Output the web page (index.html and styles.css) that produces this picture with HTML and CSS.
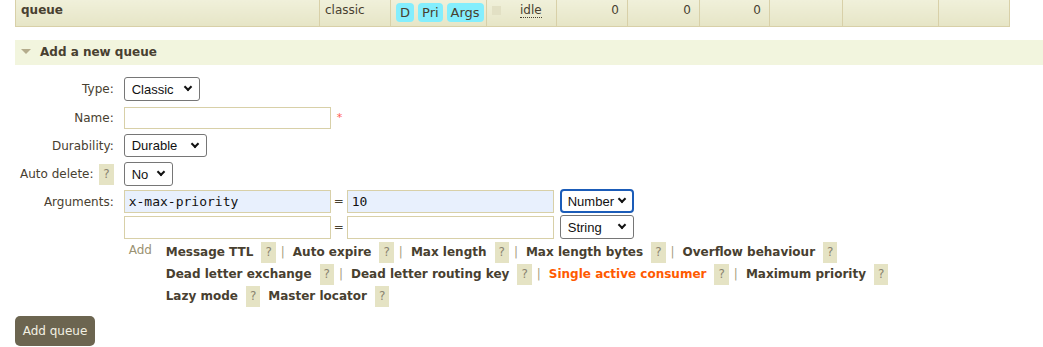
FILE: index.html
```html
<!DOCTYPE html>
<html lang="en">
<head>
  <meta charset="UTF-8">
  <title>Queues</title>
  <link rel="stylesheet" href="styles.css">
</head>
<body>

<!-- Queue list (last row visible) -->
<table class="list">
  <colgroup>
    <col style="width:304px"><col style="width:71px"><col style="width:96px"><col style="width:70px">
    <col style="width:71px"><col style="width:72px"><col style="width:70px"><col style="width:73px">
    <col style="width:96px"><col style="width:71px">
  </colgroup>
  <tr>
    <td class="name">queue</td>
    <td>classic</td>
    <td class="features"><span class="badge">D</span><span class="badge">Pri</span><span class="badge">Args</span></td>
    <td><span class="state-box"></span><abbr class="state">idle</abbr></td>
    <td class="r">0</td>
    <td class="r">0</td>
    <td class="r">0</td>
    <td></td>
    <td></td>
    <td></td>
  </tr>
</table>

<!-- Add queue section -->
<div class="section">
  <h2><span class="arrow"></span>Add a new queue</h2>
  <form name="addQueue" onsubmit="return false">
    <table class="form">
      <tr class="first">
        <th>Type:</th>
        <td><span class="sel w-type"><select><option>Classic</option></select></span></td>
      </tr>
      <tr>
        <th>Name:</th>
        <td><input type="text" class="txt"><span class="mand">*</span></td>
      </tr>
      <tr>
        <th>Durability:</th>
        <td><span class="sel w-dur"><select><option>Durable</option></select></span></td>
      </tr>
      <tr>
        <th>Auto delete: <span class="help">?</span></th>
        <td><span class="sel w-no"><select><option>No</option></select></span></td>
      </tr>
      <tr class="args">
        <th class="top">Arguments:</th>
        <td>
          <div class="arg-row">
            <input type="text" class="txt mono filled" value="x-max-priority">
            <span class="eq">=</span>
            <input type="text" class="txt mono filled" value="10">
            <span class="sel w-kind focus"><select><option>Number</option></select></span>
          </div>
          <div class="arg-row">
            <input type="text" class="txt mono">
            <span class="eq">=</span>
            <input type="text" class="txt mono">
            <span class="sel w-kind"><select><option>String</option></select></span>
          </div>
          <div class="add-row">
            <span class="add-label">Add</span>
            <div class="arg-links">
              <div class="line">
                <span class="arg">Message TTL</span><span class="help">?</span><span class="sep">|</span>
                <span class="arg">Auto expire</span><span class="help">?</span><span class="sep">|</span>
                <span class="arg">Max length</span><span class="help">?</span><span class="sep">|</span>
                <span class="arg">Max length bytes</span><span class="help">?</span><span class="sep">|</span>
                <span class="arg">Overflow behaviour</span><span class="help">?</span>
              </div>
              <div class="line">
                <span class="arg">Dead letter exchange</span><span class="help">?</span><span class="sep">|</span>
                <span class="arg">Dead letter routing key</span><span class="help">?</span><span class="sep">|</span>
                <span class="arg hot">Single active consumer</span><span class="help">?</span><span class="sep">|</span>
                <span class="arg">Maximum priority</span><span class="help">?</span>
              </div>
              <div class="line">
                <span class="arg">Lazy mode</span><span class="help">?</span>
                <span class="arg">Master locator</span><span class="help">?</span>
              </div>
            </div>
          </div>
        </td>
      </tr>
    </table>
    <button type="submit">Add queue</button>
  </form>
</div>

</body>
</html>
```

FILE: styles.css
```css
body {
  margin: 0;
  font-family: "DejaVu Sans", Verdana, sans-serif;
  font-size: 12px;
  color: #484030;
  background-color: #fff;
}

/* queue list */
.list {
  margin-left: 15px;
  border-collapse: collapse;
  table-layout: fixed;
  width: 994px;
}

.list td {
  border: 1px solid #d8d0a8;
  border-top: none;
  background: linear-gradient(#f0f0da, #e6e5c6);
  padding: 3px 5px 4px;
  line-height: 15px;
  height: 19px;
  vertical-align: top;
  white-space: nowrap;
}

.list td.name {
  font-weight: bold;
}

.list td.r {
  text-align: right;
  padding-right: 8px;
}

.list td.features {
  padding-left: 5px;
}

.badge {
  display: inline-block;
  background-color: #84eefd;
  border-radius: 4px;
  padding: 0 4px;
  margin-right: 4px;
  line-height: 19px;
  font-size: 13px;
}

.state-box {
  display: inline-block;
  width: 9px;
  height: 9px;
  margin: 3px 0 0 0;
  background-color: #e2e0c4;
  vertical-align: top;
}

.state {
  margin-left: 19px;
  text-decoration: none;
  border-bottom: 1px dotted #484030;
}

/* section */
.section h2 {
  margin: 13px 0 0 15px;
  height: 25px;
  line-height: 25px;
  font-size: 12px;
  font-weight: bold;
  background-color: #f2f5de;
}

.arrow {
  display: inline-block;
  width: 0;
  height: 0;
  margin: 0 9px 2px 6px;
  border-left: 5px solid transparent;
  border-right: 5px solid transparent;
  border-top: 5px solid #b4ac8c;
  vertical-align: middle;
}

.form {
  margin: 9px 0 0 15px;
  border-spacing: 0;
  line-height: 16px;
}

.form th {
  font-weight: normal;
  text-align: right;
  padding: 3px 5px 2px;
  white-space: nowrap;
}

.form td {
  padding: 3px 5px 2px;
}

.form tr.first th,
.form tr.first td {
  padding-bottom: 3px;
}

.form tr.args td {
  padding-top: 1px;
}

.form th.top {
  vertical-align: top;
  padding-top: 6px;
}

.help {
  display: inline-block;
  background-color: #e5e3c4;
  color: #8a8470;
  padding: 0 4px;
  line-height: 21px;
  font-weight: normal;
  vertical-align: middle;
}

.form th .help {
  margin-left: 2px;
}

/* selects */
.sel {
  position: relative;
  display: inline-block;
  vertical-align: middle;
}

.sel select {
  display: block;
  appearance: none;
  -webkit-appearance: none;
  font-family: "Liberation Sans", Arial, sans-serif;
  font-size: 13px;
  color: #111;
  background-color: #fff;
  border: 1px solid #767676;
  border-radius: 3px;
  padding: 0 0 0 7px;
  height: 24px;
  width: 100%;
  outline: none;
}

.sel::after {
  content: "";
  position: absolute;
  right: 9px;
  top: 7px;
  width: 4px;
  height: 4px;
  border-right: 2px solid #111;
  border-bottom: 2px solid #111;
  transform: rotate(45deg);
  pointer-events: none;
}

.w-type { width: 76px; }
.w-dur { width: 83px; }
.w-dur select { height: 23px; }
.w-no { width: 49px; }
.w-kind { width: 74px; }

.sel.focus select {
  border: 2px solid #1b5cb8;
  border-radius: 4px;
  padding-left: 6px;
}

/* text inputs */
.txt {
  box-sizing: border-box;
  width: 207px;
  height: 22px;
  border: 1px solid #d8d0a8;
  background-color: #fff;
  padding: 0 4px;
  vertical-align: middle;
  outline: none;
}

.mono {
  font-family: "DejaVu Sans Mono", monospace;
  font-size: 13px;
  color: #111;
  height: 23px;
}

.filled {
  background-color: #e8f0fd;
}

.mand {
  color: #ff5a50;
  margin-left: 6px;
  font-size: 11px;
  vertical-align: middle;
}

.arg-row {
  display: flex;
  align-items: center;
  margin-bottom: 2px;
}

.eq {
  width: 16px;
  text-align: center;
}

.arg-row .sel {
  margin-left: 6px;
}

.add-row {
  display: flex;
}

.add-label {
  width: 37px;
  padding-left: 5px;
  color: #9a9272;
  line-height: 18px;
}

.arg-links .line {
  display: flex;
  align-items: center;
  height: 22px;
}

.arg {
  font-weight: bold;
  margin-right: 8px;
}

.arg.hot {
  color: #ff5a00;
}

.sep {
  color: #a8a080;
  margin: 0 8px 0 5px;
}

.help + .arg {
  margin-left: 8px;
}

button {
  margin: 7px 0 0 15px;
  width: 80px;
  height: 30px;
  padding: 0;
  border: none;
  border-radius: 5px;
  background-color: #6c6550;
  color: #f2f0e2;
  font-family: "DejaVu Sans", Verdana, sans-serif;
  font-size: 12px;
  cursor: pointer;
}
```
